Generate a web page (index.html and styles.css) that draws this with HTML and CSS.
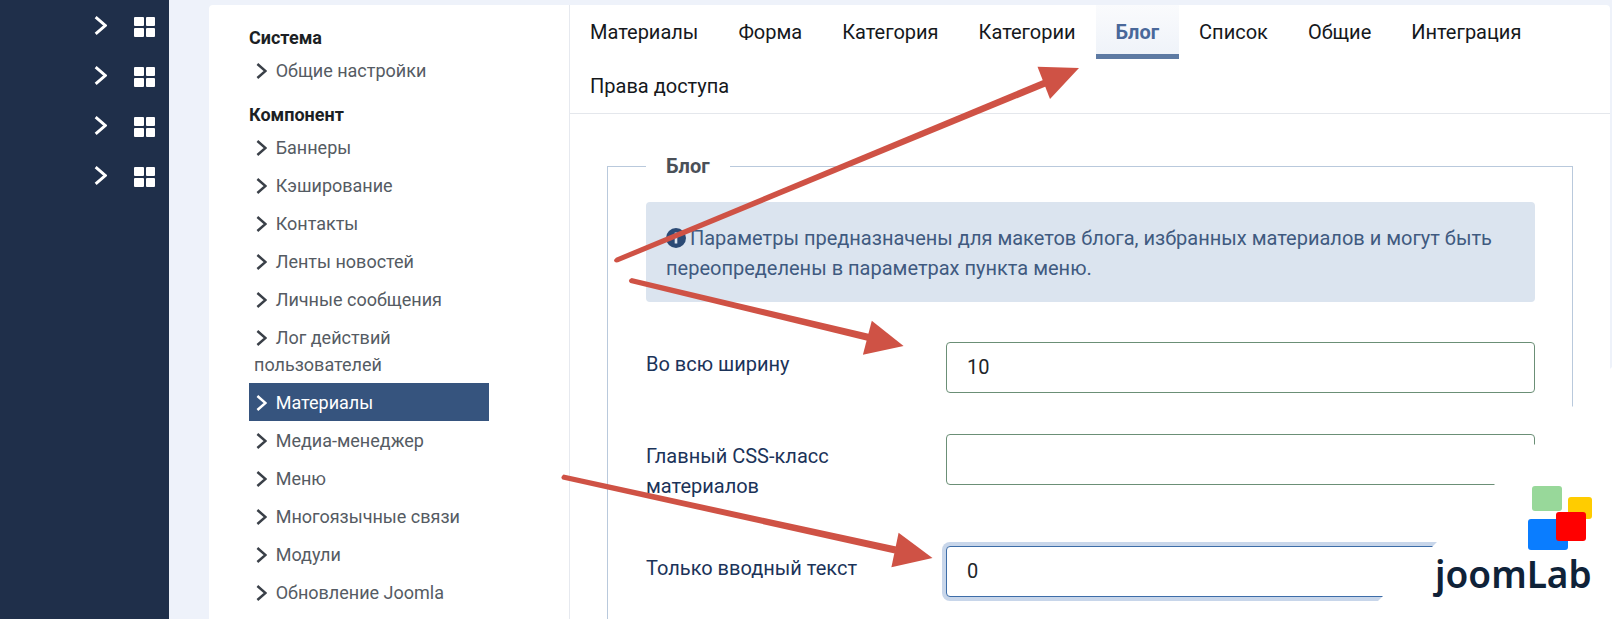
FILE: index.html
```html
<!DOCTYPE html>
<html lang="ru">
<head>
<meta charset="utf-8">
<title>Материалы: настройки</title>
<link rel="stylesheet" href="styles.css">
</head>
<body>
<svg width="0" height="0" class="defs"><defs>
<symbol id="chev" viewBox="0 0 11 16"><path d="M1.4 1 9.5 8 1.4 15" fill="none" stroke="currentColor" stroke-width="2.5"/></symbol>
</defs></svg>
<aside class="sidebar">
  <div class="side-row"><svg class="side-chev"><use href="#chev"/></svg><span class="tile"><i></i><i></i><i></i><i></i></span></div>
  <div class="side-row"><svg class="side-chev"><use href="#chev"/></svg><span class="tile"><i></i><i></i><i></i><i></i></span></div>
  <div class="side-row"><svg class="side-chev"><use href="#chev"/></svg><span class="tile"><i></i><i></i><i></i><i></i></span></div>
  <div class="side-row"><svg class="side-chev"><use href="#chev"/></svg><span class="tile"><i></i><i></i><i></i><i></i></span></div>
</aside>
<main class="main">
  <div class="card">
    <nav class="nav">
      <h2 class="nav-head">Система</h2>
      <ul class="nav-list">
        <li class="nav-item"><svg class="chev"><use href="#chev"/></svg>Общие настройки</li>
      </ul>
      <h2 class="nav-head nav-head-2">Компонент</h2>
      <ul class="nav-list">
        <li class="nav-item"><svg class="chev"><use href="#chev"/></svg>Баннеры</li>
        <li class="nav-item"><svg class="chev"><use href="#chev"/></svg>Кэширование</li>
        <li class="nav-item"><svg class="chev"><use href="#chev"/></svg>Контакты</li>
        <li class="nav-item"><svg class="chev"><use href="#chev"/></svg>Ленты новостей</li>
        <li class="nav-item"><svg class="chev"><use href="#chev"/></svg>Личные сообщения</li>
        <li class="nav-item"><svg class="chev"><use href="#chev"/></svg>Лог действий пользователей</li>
        <li class="nav-item active"><svg class="chev"><use href="#chev"/></svg>Материалы</li>
        <li class="nav-item"><svg class="chev"><use href="#chev"/></svg>Медиа-менеджер</li>
        <li class="nav-item"><svg class="chev"><use href="#chev"/></svg>Меню</li>
        <li class="nav-item"><svg class="chev"><use href="#chev"/></svg>Многоязычные связи</li>
        <li class="nav-item"><svg class="chev"><use href="#chev"/></svg>Модули</li>
        <li class="nav-item"><svg class="chev"><use href="#chev"/></svg>Обновление Joomla</li>
      </ul>
    </nav>
    <section class="panel">
      <div class="tabs">
        <a class="tab">Материалы</a>
        <a class="tab">Форма</a>
        <a class="tab">Категория</a>
        <a class="tab">Категории</a>
        <a class="tab tab-active">Блог</a>
        <a class="tab">Список</a>
        <a class="tab">Общие</a>
        <a class="tab">Интеграция</a>
        <a class="tab">Права доступа</a>
      </div>
      <div class="panel-body">
        <fieldset class="group">
          <legend class="group-title">Блог</legend>
          <div class="alert">
            <svg class="info" viewBox="0 0 20 20"><circle cx="10" cy="10" r="10" fill="#2b4a75"/><rect x="8.7" y="8.5" width="2.6" height="7" fill="#dbe4ef"/><rect x="8.7" y="4.5" width="2.6" height="2.6" fill="#dbe4ef"/></svg>
            Параметры предназначены для макетов блога, избранных материалов и могут быть переопределены в параметрах пункта меню.
          </div>
          <div class="row">
            <label class="row-label" for="f1">Во всю ширину</label>
            <input class="field" id="f1" value="10">
          </div>
          <div class="row">
            <label class="row-label" for="f2">Главный CSS-класс материалов</label>
            <input class="field" id="f2" value="">
          </div>
          <div class="row">
            <label class="row-label" for="f3">Только вводный текст</label>
            <input class="field field-focus" id="f3" value="0">
          </div>
        </fieldset>
      </div>
    </section>
  </div>
</main>
<div class="erase"></div>
<svg class="arrows" viewBox="0 0 1612 619" width="1612" height="619">
  <g fill="#cf5245" stroke="none">
    <path d="M616 257.7 1043.7 79.8 1046.3 86.2 618 262.3Q614 263 614 260Z"/>
    <path d="M1037.5 66.7 1079 68 1050 99Z"/>
    <path d="M631.6 278 869.8 334 868.2 341 630.4 283Q627 280 631.6 278Z"/>
    <path d="M871.8 320.7 903.6 346 862.9 354.7Z"/>
    <path d="M563.5 474.5 896.3 546.6 894.7 553.4 562.5 479.5Q560 477 563.5 474.5Z"/>
    <path d="M898.6 532.7 932.5 558 891.4 567.3Z"/>
  </g>
</svg>
<div class="logo">
  <span class="sq sq-green"></span>
  <span class="sq sq-yellow"></span>
  <span class="sq sq-blue"></span>
  <span class="sq sq-red"></span>
  <span class="logo-text">joomLab</span>
</div>
</body>
</html>
```

FILE: styles.css
```css
* { box-sizing: border-box; }
html, body { margin: 0; height: 100%; }
body {
  display: flex;
  overflow: hidden;
  background: #eef2fa;
  font-family: Roboto, "Liberation Sans", sans-serif;
  font-size: 20px;
  line-height: 30px;
  color: #111;
}
.defs { position: absolute; }

.sidebar {
  flex: 0 0 169px;
  background: #1f2f4a;
  padding-top: 2px;
}
.side-row {
  height: 50px;
  display: flex;
  align-items: center;
  padding-left: 94px;
}
.side-chev { width: 13px; height: 19px; color: #fff; margin-top: -3px; }
.tile {
  margin-left: 27px;
  width: 21px;
  height: 20px;
  display: grid;
  grid-template-columns: 1fr 1fr;
  gap: 2px;
}
.tile i { background: #fff; display: block; border-radius: 1px; }

.main { flex: 1; padding: 5px 2px 0 40px; min-width: 0; }
.card {
  display: flex;
  background: #fff;
  border-radius: 4px 4px 0 0;
  min-height: 100%;
}

.nav {
  flex: 0 0 361px;
  padding: 19px 0 0 40px;
  border-right: 1px solid #e6e9ef;
}
.nav-head {
  margin: 0;
  font-size: 18px;
  font-weight: 700;
  line-height: 27px;
  color: #1c1f24;
}
.nav-head-2 { margin-top: 11.5px; }
.nav-list { list-style: none; margin: 0; padding: 0; width: 240px; }
.nav-item {
  padding: 6px 0 5px 5px;
  font-size: 18px;
  line-height: 27px;
  color: #555b63;
}
.chev {
  width: 11px;
  height: 16px;
  margin: 0 8.7px 0 2px;
  vertical-align: -2px;
  color: #3a4048;
}
.nav-item.active { background: #36547e; color: #fff; }
.active .chev { color: #fff; }

.panel { flex: 1; min-width: 0; }
.tabs {
  display: flex;
  flex-wrap: wrap;
  border-bottom: 1px solid #e4e7ec;
}
.tab {
  height: 54px;
  padding: 0 20px;
  display: flex;
  align-items: center;
  color: #15181c;
  font-size: 20px;
}
.tab-active {
  font-weight: 700;
  color: #49689a;
  background: linear-gradient(#fafbfd, #eff3f9);
  border-bottom: 5px solid #5d7aa3;
  padding-top: 5px;
}

.panel-body { padding: 38.5px 37px 0; }
.group {
  margin: 0;
  padding: 0 37px 120px 38px;
  border: 1px solid #b9c9dc;
  border-bottom: 0;
  min-width: 0;
}
.group-title {
  padding: 0 20px;
  font-weight: 700;
  color: #4a5058;
  font-size: 20px;
  line-height: 27px;
}
.alert {
  margin: 22px 0 40px;
  padding: 21px 20px 19px;
  background: #dbe4ef;
  border-radius: 4px;
  color: #3f5a80;
  line-height: 30px;
  font-size: 20px;
}
.info { width: 20px; height: 20px; vertical-align: -3px; margin-right: -1px; }

.row {
  display: flex;
  align-items: flex-start;
  margin-bottom: 41px;
}
.row-label {
  flex: 0 0 300px;
  padding: 7px 30px 4px 0;
  color: #1b3359;
  line-height: 30px;
  font-size: 20px;
}
.field {
  flex: 1;
  min-width: 0;
  height: 51px;
  border: 1px solid #6b8f76;
  border-radius: 4px;
  padding: 0 20px;
  background: #fff;
  color: #212529;
  font: 20px Roboto, "Liberation Sans", sans-serif;
  outline: 0;
}
.field-focus {
  border-color: #3d6da8;
  box-shadow: 0 0 0 4px #c8d6ea;
}

.erase {
  position: absolute;
  inset: 0;
  background: #fff;
  clip-path: polygon(1612px 367px, 1612px 619px, 1360px 619px);
}
.arrows { position: absolute; left: 0; top: 0; pointer-events: none; }

.logo { position: absolute; left: 1420px; top: 480px; width: 190px; height: 130px; }
.sq { position: absolute; display: block; border-radius: 3px; }
.sq-green { left: 112px; top: 6px; width: 30px; height: 25px; background: #98d89a; }
.sq-yellow { left: 148px; top: 17px; width: 24px; height: 22px; background: #ffcc00; }
.sq-blue { left: 108px; top: 39px; width: 40px; height: 31px; background: #0a7dff; }
.sq-red { left: 136px; top: 32px; width: 30px; height: 29px; background: #ff0000; }
.logo-text {
  position: absolute;
  left: 15px;
  top: 71px;
  font-family: "Noto Sans", sans-serif;
  font-weight: 600;
  font-size: 37px;
  line-height: 46px;
  color: #0f2238;
  white-space: nowrap;
}
```
